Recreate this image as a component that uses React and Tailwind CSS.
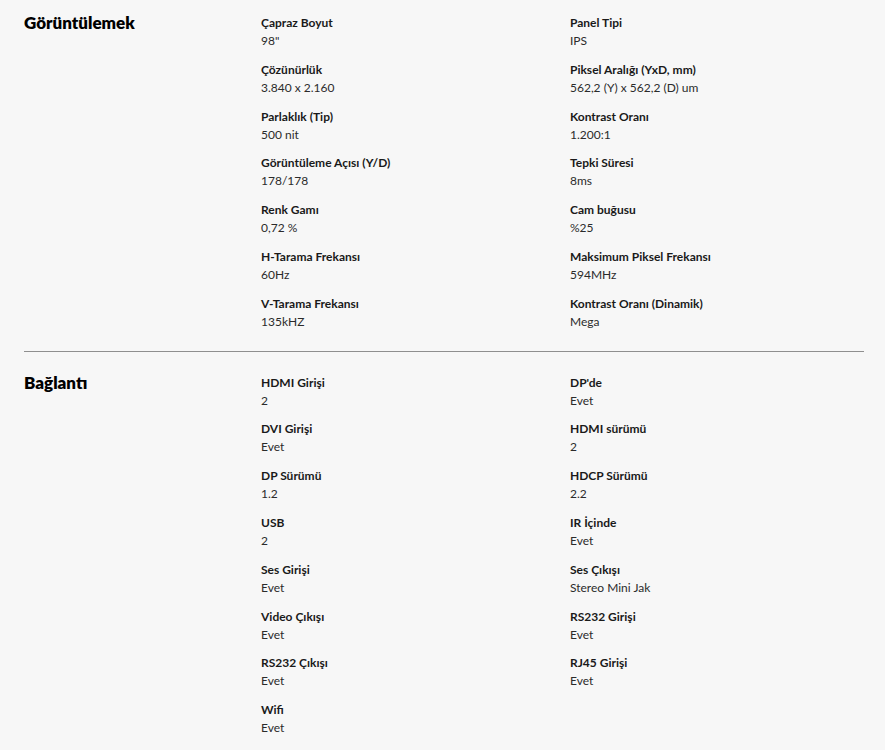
import React from "react";

const sections = [
  {
    title: "Görüntülemek",
    items: [
      ["Çapraz Boyut", "98\""],
      ["Panel Tipi", "IPS"],
      ["Çözünürlük", "3.840 x 2.160"],
      ["Piksel Aralığı (YxD, mm)", "562,2 (Y) x 562,2 (D) um"],
      ["Parlaklık (Tip)", "500 nit"],
      ["Kontrast Oranı", "1.200:1"],
      ["Görüntüleme Açısı (Y/D)", "178/178"],
      ["Tepki Süresi", "8ms"],
      ["Renk Gamı", "0,72 %"],
      ["Cam buğusu", "%25"],
      ["H-Tarama Frekansı", "60Hz"],
      ["Maksimum Piksel Frekansı", "594MHz"],
      ["V-Tarama Frekansı", "135kHZ"],
      ["Kontrast Oranı (Dinamik)", "Mega"],
    ],
  },
  {
    title: "Bağlantı",
    items: [
      ["HDMI Girişi", "2"],
      ["DP'de", "Evet"],
      ["DVI Girişi", "Evet"],
      ["HDMI sürümü", "2"],
      ["DP Sürümü", "1.2"],
      ["HDCP Sürümü", "2.2"],
      ["USB", "2"],
      ["IR İçinde", "Evet"],
      ["Ses Girişi", "Evet"],
      ["Ses Çıkışı", "Stereo Mini Jak"],
      ["Video Çıkışı", "Evet"],
      ["RS232 Girişi", "Evet"],
      ["RS232 Çıkışı", "Evet"],
      ["RJ45 Girişi", "Evet"],
      ["Wifi", "Evet"],
    ],
  },
];

const SpecSection = ({ title, items, last }) => (
  <div className={`grid grid-cols-[237px_309px_1fr] pt-[14px] ${last ? "" : "pb-[9px] border-b border-[#8f8f8f]"}`}>
    <h2 className="text-[17px] leading-[18px] font-extrabold text-black font-['Lato',sans-serif]">
      {title}
    </h2>
    <div className="col-span-2 grid grid-cols-[309px_1fr]">
      {items.map(([label, value]) => (
        <div key={label} className="mb-[10.8px]">
          <p className="text-[12px] leading-[18px] font-bold text-[#1a1a1a]">{label}</p>
          <p className="text-[12px] leading-[18px] text-[#2b2b2b]">{value}</p>
        </div>
      ))}
    </div>
  </div>
);

export default function App() {
  return (
    <div className="min-h-[750px] bg-[#f7f7f7] px-[24px] pr-[21px] font-['Lato',sans-serif]">
      {sections.map((s, i) => (
        <div key={s.title} className={i > 0 ? "pt-[8px]" : ""}>
          <SpecSection {...s} last={i === sections.length - 1} />
        </div>
      ))}
    </div>
  );
}
